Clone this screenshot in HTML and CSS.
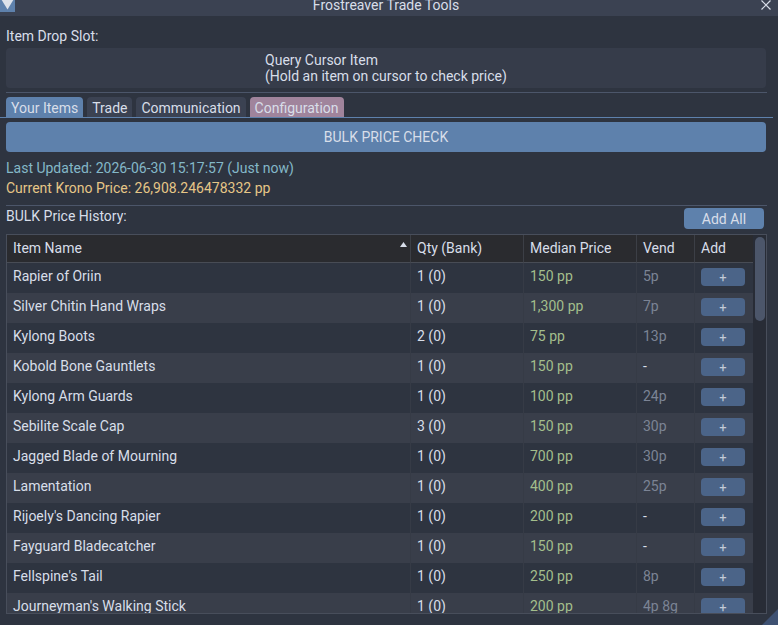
FILE: index.html
```html
<!DOCTYPE html>
<html>

<head>
	<title>Frostreaver Trade Tools</title>
	<link rel="stylesheet" href="styles.css">
</head>

<body>
	<div class="window">
		<div class="titlebar">
			<div class="collapse">
				<svg width="15" height="12" viewBox="0 0 15 12"><polygon points="1.7,0 13.3,0 7.5,9.5" fill="#dde2ea" /></svg>
			</div>
			<div class="title">Frostreaver Trade Tools</div>
			<div class="close">
				<svg width="21" height="12" viewBox="0 0 21 12"><path d="M4.5 0.5 L13.5 9.5 M13.5 0.5 L4.5 9.5" stroke="#d8dee9" stroke-width="1.2" /></svg>
			</div>
		</div>
		<div class="content">
			<div class="label">Item Drop Slot:</div>
			<div class="drop">
				<div class="drop-text">Query Cursor Item<br>(Hold an item on cursor to check price)</div>
			</div>
			<div class="sep"></div>
			<div class="tabs">
				<div class="tab active">Your Items</div>
				<div class="tab">Trade</div>
				<div class="tab">Communication</div>
				<div class="tab config">Configuration</div>
			</div>
			<button class="bulk">BULK PRICE CHECK</button>
			<div class="status updated">Last Updated: 2026-06-30 15:17:57 (Just now)</div>
			<div class="status krono">Current Krono Price: 26,908.246478332 pp</div>
			<div class="sep sep-history"></div>
			<div class="history-head">
				<span>BULK Price History:</span>
				<button class="add-all">Add All</button>
			</div>
			<div class="table-wrap">
				<div class="table-scroll">
					<table>
						<colgroup>
							<col class="c-name">
							<col class="c-qty">
							<col class="c-price">
							<col class="c-vend">
							<col class="c-add">
						</colgroup>
						<tr>
							<th><div class="sort">Item Name<svg width="7" height="5" viewBox="0 0 7 5"><polygon points="0,5 7,5 3.5,0" fill="#d8dee9" /></svg></div></th>
							<th>Qty (Bank)</th>
							<th>Median Price</th>
							<th>Vend</th>
							<th>Add</th>
						</tr>
						<tr><td>Rapier of Oriin</td><td>1 (0)</td><td class="price">150 pp</td><td class="vend">5p</td><td><div class="plus">+</div></td></tr>
						<tr><td>Silver Chitin Hand Wraps</td><td>1 (0)</td><td class="price">1,300 pp</td><td class="vend">7p</td><td><div class="plus">+</div></td></tr>
						<tr><td>Kylong Boots</td><td>2 (0)</td><td class="price">75 pp</td><td class="vend">13p</td><td><div class="plus">+</div></td></tr>
						<tr><td>Kobold Bone Gauntlets</td><td>1 (0)</td><td class="price">150 pp</td><td>-</td><td><div class="plus">+</div></td></tr>
						<tr><td>Kylong Arm Guards</td><td>1 (0)</td><td class="price">100 pp</td><td class="vend">24p</td><td><div class="plus">+</div></td></tr>
						<tr><td>Sebilite Scale Cap</td><td>3 (0)</td><td class="price">150 pp</td><td class="vend">30p</td><td><div class="plus">+</div></td></tr>
						<tr><td>Jagged Blade of Mourning</td><td>1 (0)</td><td class="price">700 pp</td><td class="vend">30p</td><td><div class="plus">+</div></td></tr>
						<tr><td>Lamentation</td><td>1 (0)</td><td class="price">400 pp</td><td class="vend">25p</td><td><div class="plus">+</div></td></tr>
						<tr><td>Rijoely's Dancing Rapier</td><td>1 (0)</td><td class="price">200 pp</td><td>-</td><td><div class="plus">+</div></td></tr>
						<tr><td>Fayguard Bladecatcher</td><td>1 (0)</td><td class="price">150 pp</td><td>-</td><td><div class="plus">+</div></td></tr>
						<tr><td>Fellspine's Tail</td><td>1 (0)</td><td class="price">250 pp</td><td class="vend">8p</td><td><div class="plus">+</div></td></tr>
						<tr><td>Journeyman's Walking Stick</td><td>1 (0)</td><td class="price">200 pp</td><td class="vend">4p 8g</td><td><div class="plus">+</div></td></tr>
					</table>
				</div>
				<div class="scrollbar">
					<div class="thumb"></div>
				</div>
			</div>
		</div>
		<svg class="grip" width="16" height="16" viewBox="0 0 16 16"><polygon points="0,16 16,0 16,16" fill="#3e5172" /></svg>
	</div>
</body>

</html>
```

FILE: styles.css
```css
html,
body {
	margin: 0;
	padding: 0;
}

body {
	background: #2e3440;
	color: #d8dee9;
	font-family: Roboto, "Noto Sans", sans-serif;
	font-size: 14px;
	line-height: 16px;
}

.window {
	position: relative;
	width: 778px;
	height: 625px;
	overflow: hidden;
}

.titlebar {
	display: flex;
	height: 16px;
	background: #3b4252;
}

.collapse {
	width: 15px;
	height: 12px;
	background: #5e81ac;
}

.collapse svg,
.close svg {
	display: block;
}

.title {
	flex: 1;
	text-align: center;
	line-height: 11px;
	white-space: nowrap;
}

.close {
	width: 21px;
}

.content {
	padding: 0 12px 0 6px;
}

.label {
	margin-top: 12px;
}

.drop {
	display: flex;
	justify-content: center;
	margin-top: 4px;
	padding: 4px 0;
	background: #363c4a;
	border-radius: 4px;
}

.sep {
	height: 1px;
	margin-top: 4px;
	margin-right: -1px;
	background: #4c566a;
}

.tabs {
	display: flex;
	gap: 4px;
	margin: 4px -7px 0 -6px;
	padding-left: 6px;
	border-bottom: 1px solid #5e81ac;
}

.tab {
	height: 17px;
	padding: 3px 5px 0;
	background: #3b4252;
	border-radius: 4px 4px 0 0;
	white-space: nowrap;
}

.tab.active {
	background: #5e81ac;
}

.tab.config {
	background: #a0849c;
}

button {
	font: inherit;
	color: inherit;
	border: 0;
	border-radius: 4px;
	background: #5e81ac;
	cursor: pointer;
}

.bulk {
	display: block;
	width: 100%;
	height: 30px;
	margin-top: 4px;
	padding: 0;
}

.status {
	margin-top: 4px;
}

.updated {
	margin-top: 8px;
	color: #84b8c8;
}

.krono {
	color: #e6c687;
}

.sep-history {
	margin-top: 9px;
}

.history-head {
	display: flex;
	justify-content: space-between;
	align-items: flex-start;
	margin-top: 2px;
}

.add-all {
	width: 80px;
	height: 21px;
	margin-right: 2px;
	padding: 1px 0 0;
}

.table-wrap {
	display: flex;
	width: 759px;
	height: 378px;
	margin-top: 5px;
	border: 1px solid #484e5b;
}

.table-scroll {
	width: 746px;
	overflow: hidden;
}

table {
	width: 746px;
	table-layout: fixed;
	border-collapse: separate;
	border-spacing: 0;
}

.c-name {
	width: 404px;
}

.c-qty,
.c-price {
	width: 113px;
}

.c-vend,
.c-add {
	width: 58px;
}

th,
td {
	text-align: left;
	white-space: nowrap;
	overflow: hidden;
	vertical-align: top;
	border-right: 1px solid #363b46;
}

th {
	padding: 5px 6px 6px;
	font-weight: normal;
	background: #2a2b2f;
	border-right-color: #3c3f46;
	border-bottom: 1px solid #484c55;
}

td {
	height: 16px;
	padding: 5px 6px 9px;
}

th:last-child,
td:last-child {
	border-right: 0;
}

tr:nth-child(odd) td {
	background: #393e4a;
}

.sort {
	display: flex;
	align-items: flex-start;
	justify-content: space-between;
}

.sort svg {
	margin: 2px -3px 0 0;
}

.price {
	color: #a3be8c;
}

.vend {
	color: #7c8495;
}

.plus {
	width: 44px;
	height: 18px;
	margin-bottom: -2px;
	font-size: 13px;
	line-height: 18px;
	padding-top: 1px;
	box-sizing: border-box;
	text-align: center;
	color: #c3cbd8;
	background: #4b6488;
	border-radius: 4px;
}

.scrollbar {
	width: 13px;
	padding: 2px 0 0 2px;
	box-sizing: border-box;
	background: #282c36;
}

.thumb {
	width: 10px;
	height: 84px;
	background: #4c566a;
	border-radius: 5px;
}

.grip {
	position: absolute;
	right: 0;
	bottom: 0;
	display: block;
}
```
